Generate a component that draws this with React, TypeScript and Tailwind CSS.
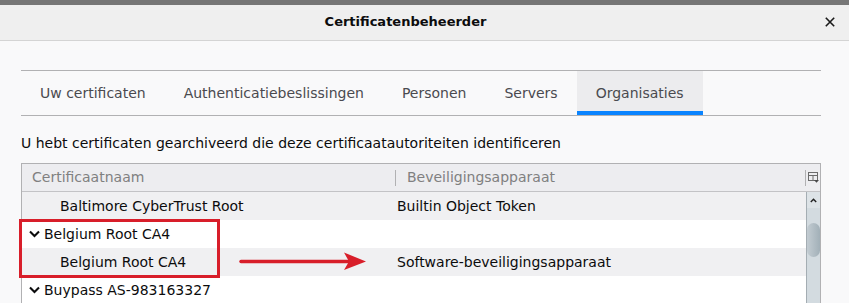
import React from "react";

const Chevron = () => (
  <svg width="11" height="8" viewBox="0 0 11 8" className="shrink-0">
    <path d="M1 1.5 L5.5 6 L10 1.5" fill="none" stroke="#0c0c0d" strokeWidth="2.1" />
  </svg>
);

export default function App() {
  const tabs = ["Uw certificaten", "Authenticatiebeslissingen", "Personen", "Servers", "Organisaties"];
  return (
    <div className="relative w-[849px] h-[303px] overflow-hidden bg-[#f9f9fa] font-['DejaVu_Sans',sans-serif]">
      <div className="h-[5px] bg-[#767676]" />
      <div className="h-[36px] bg-[#efefef] border-b border-[#d4d4d4] flex items-center">
        <div className="flex-1 flex justify-center text-[13px] font-bold text-[#0c0c0d] leading-[16px] pb-[2px]">
          Certificatenbeheerder
        </div>
        <div className="w-[38px] flex justify-center pb-[2px]">
          <svg width="10" height="10" viewBox="0 0 10 10">
            <path d="M0.8 0.8 L9.2 9.2 M9.2 0.8 L0.8 9.2" stroke="#1a1a1a" strokeWidth="1.6" />
          </svg>
        </div>
      </div>
      <div className="px-[21px]">
        <div className="mt-[29px] w-[800px] border-y border-[#b1b1b3] flex">
          {tabs.map((t) => {
            const sel = t === "Organisaties";
            return (
              <div
                key={t}
                className={
                  sel
                    ? "h-[44px] px-[19px] flex items-center text-[14px] leading-[17px] text-[#4a4a4f] bg-[#ececee] border-y-4 border-t-transparent border-b-[#0a84ff]"
                    : "h-[44px] px-[19px] flex items-center text-[14px] leading-[17px] text-[#4a4a4f] border-y-4 border-transparent"
                }
              >
                {t}
              </div>
            );
          })}
        </div>
        <div className="mt-[19px] text-[14px] leading-[17px] text-[#0c0c0d]">
          U hebt certificaten gearchiveerd die deze certificaatautoriteiten identificeren
        </div>
        <div className="mt-[11px] w-[800px] border border-[#b1b1b3] bg-white">
          <div className="h-[28px] bg-[#ededf0] border-b border-[#c3c3c6] flex items-center text-[14px] leading-[17px] text-[#808080]">
            <div className="w-[373px] pl-[10px]">Certificaatnaam</div>
            <div className="w-px h-[16px] bg-[#b1b1b3]" />
            <div className="flex-1 pl-[11px]">Beveiligingsapparaat</div>
            <div className="w-px h-[16px] bg-[#b1b1b3]" />
            <div className="w-[14px] flex justify-center">
              <svg width="11" height="11" viewBox="0 0 11 11">
                <rect x="0.5" y="0.5" width="9" height="8" fill="none" stroke="#6b6b6b" />
                <path d="M0.5 3.5 H9.5 M5 3.5 V8.5" stroke="#6b6b6b" />
                <path d="M6 8 H11 L8.5 10.8 Z" fill="#4a4a4a" />
              </svg>
            </div>
          </div>
          <div className="flex">
            <div className="flex-1 text-[14px] leading-[17px] text-[#0c0c0d]">
              <div className="h-[28px] flex items-center bg-[#f0f0f2]">
                <div className="w-[375px] pl-[38px]">Baltimore CyberTrust Root</div>
                <div>Builtin Object Token</div>
              </div>
              <div className="h-[28px] flex items-center bg-white">
                <div className="w-[375px] pl-[7px] flex items-center gap-[4px]">
                  <Chevron />
                  <span>Belgium Root CA4</span>
                </div>
              </div>
              <div className="h-[28px] flex items-center bg-[#f0f0f2]">
                <div className="w-[375px] pl-[38px]">Belgium Root CA4</div>
                <div>Software-beveiligingsapparaat</div>
              </div>
              <div className="h-[28px] flex items-center bg-white">
                <div className="w-[375px] pl-[7px] flex items-center gap-[4px]">
                  <Chevron />
                  <span>Buypass AS-983163327</span>
                </div>
              </div>
            </div>
            <div className="w-[14px] border-l border-[#a4adb3] bg-[#d3dbe0] flex flex-col">
              <div className="h-[16px] bg-[#dde3e7] flex justify-center items-center">
                <svg width="7" height="5" viewBox="0 0 7 5">
                  <path d="M0.8 4 L3.5 1.2 L6.2 4" fill="none" stroke="#222" strokeWidth="1.4" />
                </svg>
              </div>
              <div className="mt-[15px] h-[34px] rounded-full bg-gradient-to-r from-[#c3ccd2] to-[#a2b0b8]" />
            </div>
          </div>
        </div>
      </div>
      <div className="absolute left-[19px] top-[219px] w-[201px] h-[59px] border-[3px] border-[#d81e2a]" />
      <svg className="absolute left-[238px] top-[250px]" width="130" height="22" viewBox="0 0 130 22">
        <path d="M3 11.5 H112" stroke="#d81e2a" strokeWidth="3.5" strokeLinecap="round" />
        <path d="M106 2.5 L128 11.5 L106 20 L111 11.5 Z" fill="#d81e2a" />
      </svg>
    </div>
  );
}
